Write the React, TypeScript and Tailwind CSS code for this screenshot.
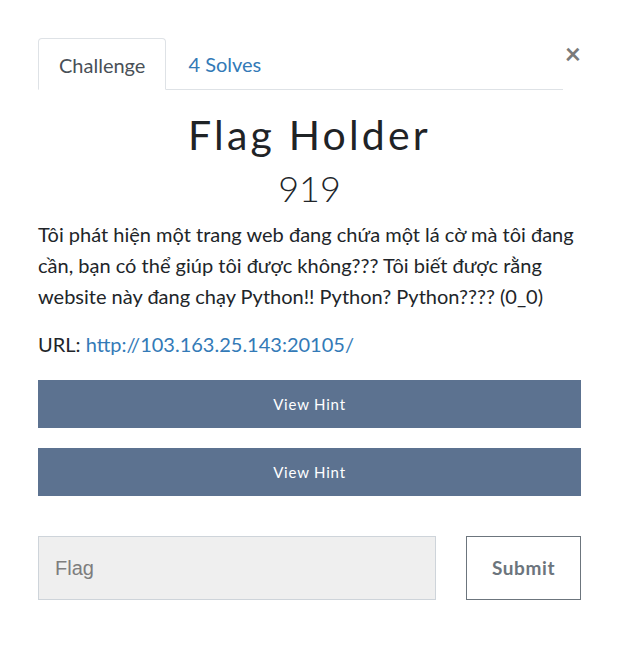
import React from 'react';

const App = () => {
  return (
    <div className="min-h-screen bg-white font-['Lato',sans-serif] text-[#212529]">
      <div className="ml-[38px] w-[543px] pt-[38px]">
        <div className="flex items-start">
          <div className="flex w-[525px] border-b border-[#dee2e6]">
            <div className="-mb-px flex h-[52px] items-center rounded-t border border-b-white border-[#dee2e6] bg-white px-5 pt-[1px] text-[20px] text-[#495057]">
              Challenge
            </div>
            <div className="flex h-[51px] items-center px-[22px] pt-[1px] text-[20px] text-[#337ab7]">
              4 Solves
            </div>
          </div>
          <button className="ml-auto mt-[1px] text-[28px] leading-none font-bold text-[#7a7a7a]">
            ×
          </button>
        </div>

        <h1 className="mt-[21px] text-center text-[41px] leading-[48px] tracking-[3.2px] text-[#1f2326]">
          Flag Holder
        </h1>
        <div className="mt-[9px] text-center text-[36px] leading-[40px] font-light">919</div>

        <p className="mt-[11px] text-[20px] leading-[31px]">
          Tôi phát hiện một trang web đang chứa một lá cờ mà tôi đang cần, bạn có thể giúp tôi được không??? Tôi biết được rằng website này đang chạy Python!! Python? Python???? (0_0)
        </p>

        <p className="mt-[17px] text-[20px] leading-[31px]">
          URL: <a className="text-[#337ab7]">http://103.163.25.143:20105/</a>
        </p>

        <div className="mt-[20px] flex flex-col gap-5">
          <button className="h-[48px] w-full bg-[#5c7290] text-[15px] tracking-[0.8px] text-white">
            View Hint
          </button>
          <button className="h-[48px] w-full bg-[#5c7290] text-[15px] tracking-[0.8px] text-white">
            View Hint
          </button>
        </div>

        <div className="mt-[40px] flex items-center">
          <input
            className="h-[64px] w-[398px] border border-[#ced4da] bg-[#efefef] px-4 font-['Liberation_Sans',sans-serif] text-[20px] text-[#495057] placeholder:text-[#7d7d7d]"
            placeholder="Flag"
          />
          <button className="ml-auto h-[64px] w-[115px] border border-[#6c757d] bg-white text-[19px] font-bold tracking-[0.6px] text-[#6c757d]">
            Submit
          </button>
        </div>
      </div>
    </div>
  );
};

export default App;
